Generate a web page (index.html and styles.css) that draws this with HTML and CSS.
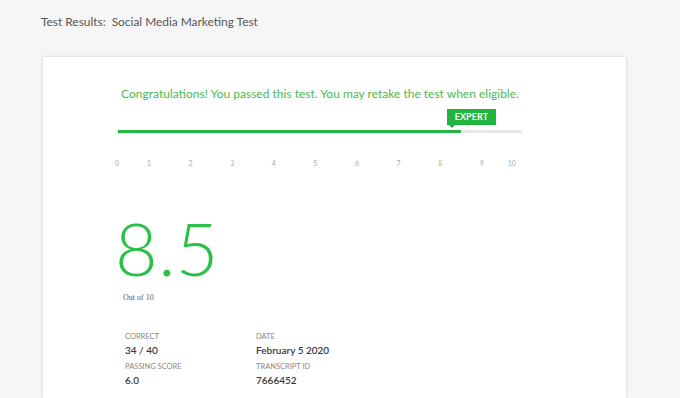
FILE: index.html
```html
<!DOCTYPE html>
<html>
<head>
<meta charset="utf-8">
<link rel="stylesheet" href="styles.css">
</head>
<body>
<header class="page-head">Test Results:&nbsp; Social Media Marketing Test</header>
<main class="card">
  <div class="inner">
    <p class="congrats">Congratulations! You passed this test. You may retake the test when eligible.</p>
    <div class="meter">
      <div class="badge-row"><span class="badge">EXPERT</span></div>
      <div class="track"><div class="fill" style="width:85%"></div></div>
    </div>
    <div class="ticks">
      <span>0</span><span>1</span><span>2</span><span>3</span><span>4</span><span>5</span><span>6</span><span>7</span><span>8</span><span>9</span><span>10</span>
    </div>
    <div class="score">8.5</div>
    <div class="outof">Out of 10</div>
    <div class="stats">
      <div class="stat"><div class="label">Correct</div><div class="value">34 / 40</div></div>
      <div class="stat"><div class="label">Date</div><div class="value">February 5 2020</div></div>
      <div class="stat"><div class="label">Passing Score</div><div class="value">6.0</div></div>
      <div class="stat"><div class="label">Transcript ID</div><div class="value">7666452</div></div>
    </div>
  </div>
</main>
</body>
</html>
```
FILE: styles.css
```css
html, body { margin: 0; padding: 0; }
body {
  background: #f6f6f6;
  font-family: "Lato", "Open Sans", sans-serif;
  height: 398px;
  overflow: hidden;
}
.page-head {
  padding: 14px 0 0 41px;
  height: 57px;
  box-sizing: border-box;
  font-size: 11.9px;
  line-height: 16px;
  color: #555;
}
.card {
  margin-left: 43px;
  width: 583px;
  height: 341px;
  background: #fff;
  box-shadow: 0 0 3px rgba(0,0,0,0.18);
}
.inner {
  margin-left: 75px;
  width: 404px;
  padding-top: 29px;
}
.congrats {
  margin: 0;
  text-align: center;
  white-space: nowrap;
  color: #4cb94c;
  font-size: 12px;
  line-height: 16px;
}
.meter { margin-top: 7px; }
.badge-row { height: 21px; position: relative; }
.badge {
  position: absolute;
  left: 329px;
  top: 0;
  width: 49px;
  height: 16px;
  background: #1fb53f;
  color: #fff;
  font-weight: 700;
  font-size: 9px;
  line-height: 16px;
  text-align: center;
  letter-spacing: 0.1px;
}
.badge::after {
  content: "";
  position: absolute;
  left: 2px;
  bottom: -3px;
  border-left: 3px solid transparent;
  border-right: 3px solid transparent;
  border-top: 3px solid #1fb53f;
}
.track { height: 3px; background: #e6e6e6; }
.fill { height: 3px; background: #1fb53f; }
.ticks {
  display: grid;
  grid-template-columns: 22.4px repeat(9, 41.6px) 18.4px;
  margin-left: -12.2px;
  margin-top: 25px;
  font-size: 7px;
  line-height: 10px;
  color: #aaa;
  text-align: center;
}
.score {
  margin-top: 42px;
  font-size: 73.5px;
  font-weight: 300;
  line-height: 76px;
  color: #2cbf4a;
  letter-spacing: 0.5px;
  margin-left: -3px;
}
.outof {
  margin-top: 7px;
  margin-left: 5px;
  font-family: "Liberation Serif", serif;
  font-size: 8px;
  line-height: 10px;
  color: #5a5a5a;
}
.stats {
  display: grid;
  grid-template-columns: 131px 1fr;
  row-gap: 5px;
  margin-top: 29px;
  margin-left: 7px;
}
.label {
  text-transform: uppercase;
  font-size: 7.5px;
  line-height: 10px;
  color: #888;
}
.value {
  margin-top: 2px;
  font-size: 10px;
  line-height: 13px;
  color: #3a3a3a;
  font-weight: 600;
}
```
